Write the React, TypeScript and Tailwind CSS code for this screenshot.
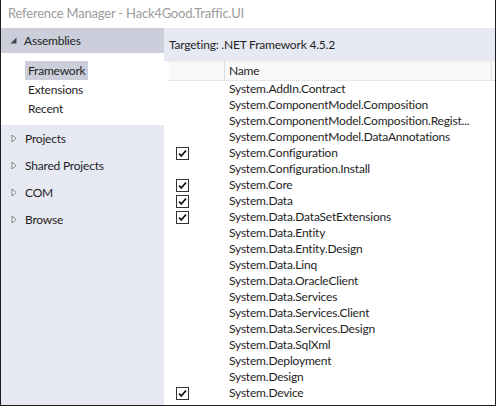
const items: { name: string; checked?: boolean }[] = [
  { name: "System.AddIn.Contract" },
  { name: "System.ComponentModel.Composition" },
  { name: "System.ComponentModel.Composition.Regist..." },
  { name: "System.ComponentModel.DataAnnotations" },
  { name: "System.Configuration", checked: true },
  { name: "System.Configuration.Install" },
  { name: "System.Core", checked: true },
  { name: "System.Data", checked: true },
  { name: "System.Data.DataSetExtensions", checked: true },
  { name: "System.Data.Entity" },
  { name: "System.Data.Entity.Design" },
  { name: "System.Data.Linq" },
  { name: "System.Data.OracleClient" },
  { name: "System.Data.Services" },
  { name: "System.Data.Services.Client" },
  { name: "System.Data.Services.Design" },
  { name: "System.Data.SqlXml" },
  { name: "System.Deployment" },
  { name: "System.Design" },
  { name: "System.Device", checked: true },
];

function Checkbox() {
  return (
    <div className="w-[13px] h-[13px] border border-[#333333] bg-white flex items-center justify-center">
      <svg width="11" height="11" viewBox="0 0 11 11">
        <path d="M2 5.5 L4.3 8 L9 2.5" fill="none" stroke="#111" strokeWidth="1.8" />
      </svg>
    </div>
  );
}

function Collapsed() {
  return (
    <svg width="6" height="9" viewBox="0 0 6 9" className="shrink-0">
      <path d="M1 1 L5 4.5 L1 8 Z" fill="#fff" stroke="#808080" strokeWidth="1" />
    </svg>
  );
}

function Expanded() {
  return (
    <svg width="7" height="7" viewBox="0 0 7 7" className="shrink-0">
      <path d="M6.5 0.5 L6.5 6.5 L0.5 6.5 Z" fill="#444" />
    </svg>
  );
}

export default function App() {
  return (
    <div className="w-[496px] h-[406px] bg-white border-x border-b border-[#1e1e1e] flex flex-col text-[12px] text-[#1e1e1e] font-['Lato',sans-serif] tracking-[-0.2px] overflow-hidden">
      {/* title */}
      <div className="h-[28px] flex items-center pl-[7px] text-[13px] text-[#9b9b9b] shrink-0">
        Reference Manager - Hack4Good.Traffic.UI
      </div>

      <div className="flex flex-1 min-h-0">
        {/* left tree */}
        <div className="w-[163px] bg-[#e6e8f2] flex flex-col shrink-0">
          <div className="h-[25px] bg-[#cccedb] flex items-center pl-[9px] gap-[7px]">
            <Expanded />
            <span>Assemblies</span>
          </div>
          <div className="h-[72px] bg-white flex flex-col pt-[8px] pl-[24px]">
            <div className="h-[19px] flex items-center">
              <span className="bg-[#cccedb] h-[19px] px-[3px] flex items-center">Framework</span>
            </div>
            <div className="h-[19px] flex items-center pl-[3px]">Extensions</div>
            <div className="h-[19px] flex items-center pl-[3px]">Recent</div>
          </div>
          {["Projects", "Shared Projects", "COM", "Browse"].map((t) => (
            <div key={t} className="h-[27px] flex items-center pl-[10px] gap-[8px]">
              <Collapsed />
              <span>{t}</span>
            </div>
          ))}
        </div>

        {/* right pane */}
        <div className="flex-1 flex flex-col min-w-0">
          <div className="h-[33px] bg-[#e6e8f2] flex items-center pl-[5px] shrink-0">
            Targeting: .NET Framework 4.5.2
          </div>
          <div className="flex-1 bg-white pl-[5px] flex flex-col">
            <div className="h-[20px] flex border-t border-t-[#e3e3e3] border-b border-b-[#d6d6d6] border-dotted bg-[#f8f8f8]">
              <div className="w-[56px] border-r border-r-[#dcdcdc] border-solid" />
              <div className="flex-1 flex items-center pl-[4px] border-r border-r-[#dcdcdc] border-solid">Name</div>
              <div className="w-[3px]" />
            </div>
            {items.map((it) => (
              <div key={it.name} className="h-[16px] flex items-center">
                <div className="w-[56px] pl-[7px] flex items-center">{it.checked && <Checkbox />}</div>
                <div className="pl-[4px] whitespace-nowrap">{it.name}</div>
              </div>
            ))}
          </div>
        </div>
      </div>
    </div>
  );
}
